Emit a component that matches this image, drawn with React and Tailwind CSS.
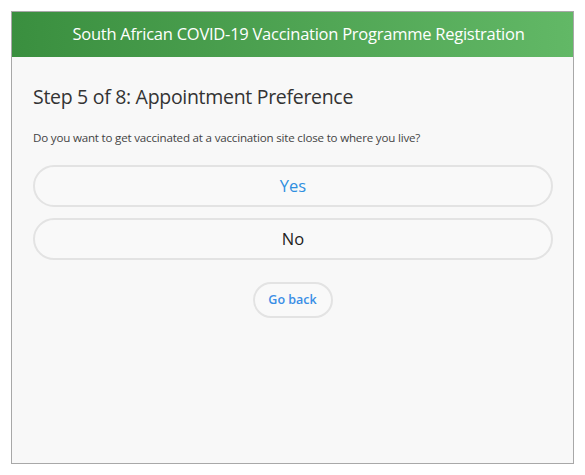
export default function App() {
  return (
    <div className="w-[585px] h-[475px] bg-white pt-[11px] pl-[11px]" style={{ fontFamily: '"Open Sans", "Noto Sans", sans-serif' }}>
      <div className="w-[563px] h-[453px] border border-[#a8a8a8] bg-[#f8f8f8] flex flex-col">
        <div className="h-[45px] bg-gradient-to-r from-[#3a8f3f] to-[#62b866] flex items-center justify-center pl-[12px]">
          <span className="text-white text-[16.5px] tracking-[-0.25px]">South African COVID-19 Vaccination Programme Registration</span>
        </div>
        <div className="flex flex-col px-[21px]">
          <h1 className="mt-[26px] text-[19.5px] leading-[28px] text-[#333] tracking-[-0.3px]">Step 5 of 8: Appointment Preference</h1>
          <p className="mt-[19px] text-[11.6px] leading-[16px] text-[#444] tracking-[-0.2px]">Do you want to get vaccinated at a vaccination site close to where you live?</p>
          <button className="mt-[19px] h-[42px] w-[520px] rounded-full border-2 border-[#e3e3e3] bg-[#f9f9f9] text-[#2f8fe0] text-[16.5px]">Yes</button>
          <button className="mt-[11px] h-[42px] w-[520px] rounded-full border-2 border-[#e3e3e3] bg-[#f9f9f9] text-[#222] text-[16.5px]">No</button>
          <div className="flex justify-center mt-[22px]">
            <button className="h-[36px] w-[80px] rounded-full border-2 border-[#e3e3e3] bg-[#f9f9f9] text-[#3a8ee6] text-[12.5px] font-semibold">Go back</button>
          </div>
        </div>
      </div>
    </div>
  );
}
